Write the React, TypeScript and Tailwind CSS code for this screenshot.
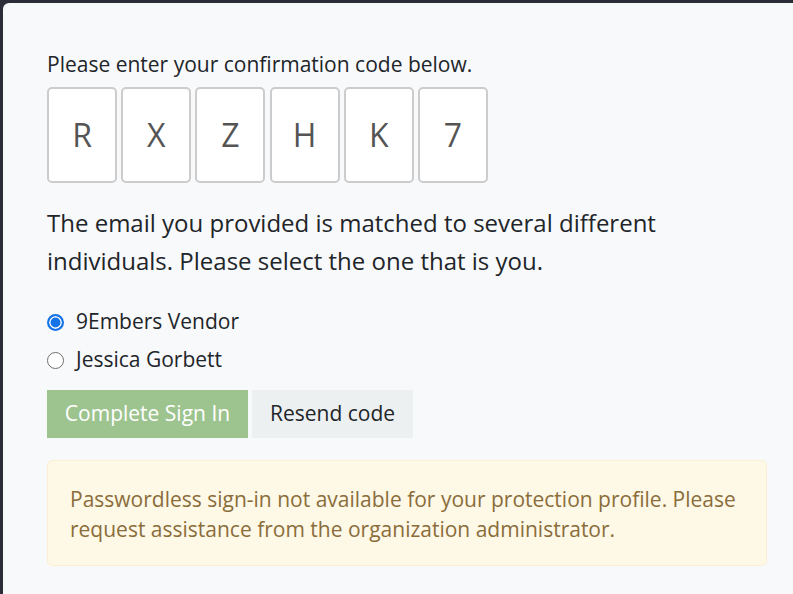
import { useState } from "react";

const CODE = ["R", "X", "Z", "H", "K", "7"];
const PEOPLE = ["9Embers Vendor", "Jessica Gorbett"];

export default function App() {
  const [selected, setSelected] = useState(PEOPLE[0]);

  return (
    <div
      className="min-h-[594px] w-full bg-[#2b2e38] pl-[3px] pt-[3px]"
      style={{ fontFamily: '"Open Sans", "Noto Sans", sans-serif' }}
    >
      <div className="min-h-[591px] rounded-tl-[6px] bg-[#f8f9fb] pl-[44px] pr-[26px] pt-[49px] text-[#212529]">
        <p className="text-[21px] leading-[24px]">Please enter your confirmation code below.</p>

        <div className="mt-[11px] flex gap-[4.2px]">
          {CODE.map((c, i) => (
            <div
              key={i}
              className="flex h-[96px] w-[70px] items-center justify-center rounded-[5px] border-2 border-[#cccccc] bg-white text-[32px] text-[#555555]"
            >
              {c}
            </div>
          ))}
        </div>

        <p className="mt-[21px] max-w-[660px] text-[24px] leading-[38px]">
          The email you provided is matched to several different individuals. Please select the one that is you.
        </p>

        <div className="mt-[23px] flex flex-col">
          {PEOPLE.map((p) => (
            <label key={p} className="flex h-[38px] items-center gap-[12px] text-[21px]">
              <input
                type="radio"
                name="person"
                className="m-0 h-[17px] w-[17px] appearance-none rounded-full border-[1.5px] border-[#6f6f6f] bg-white checked:border-[2.5px] checked:border-[#1473e6] checked:bg-[#1473e6] checked:shadow-[inset_0_0_0_1.5px_white]"
                checked={selected === p}
                onChange={() => setSelected(p)}
              />
              {p}
            </label>
          ))}
        </div>

        <div className="mt-[11px] flex gap-[4px]">
          <button className="h-[48px] w-[201px] bg-[#9dc48f] text-[21px] text-white">Complete Sign In</button>
          <button className="h-[48px] w-[161px] bg-[#edf0f1] text-[21px] text-[#212529]">Resend code</button>
        </div>

        <div className="mt-[22px] w-[720px] rounded-[5px] border border-[#fcefd2] bg-[#fef8e6] pb-[21px] pl-[22px] pr-[20px] pt-[23px] text-[21px] leading-[30px] text-[#8a6d3b]">
          Passwordless sign-in not available for your protection profile. Please request assistance from the organization
          administrator.
        </div>
      </div>
    </div>
  );
}
